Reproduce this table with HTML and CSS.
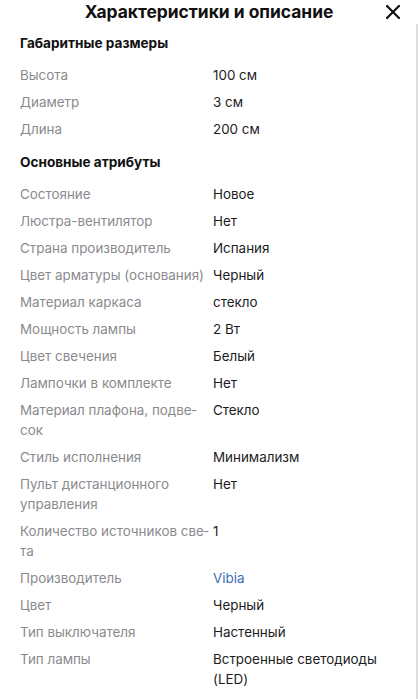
FILE: index.html
```html
<!DOCTYPE html>
<html lang="ru">
<head>
  <meta charset="UTF-8">
  <meta name="viewport" content="width=device-width, initial-scale=1.0">
  <title>Характеристики и описание</title>
  <link rel="stylesheet" href="styles.css">
</head>
<body>

  <div class="header">
    <span></span>
    <h1>Характеристики и описание</h1>
    <button class="close" aria-label="Закрыть">
      <svg width="14" height="14" viewBox="0 0 14 14">
        <path d="M1 1 L13 13 M13 1 L1 13" stroke="#111" stroke-width="2.2" stroke-linecap="round"/>
      </svg>
    </button>
  </div>

  <div class="content">
    <h2>Габаритные размеры</h2>
    <div class="specs">
      <div class="label">Высота</div><div class="value">100 см</div>
      <div class="label">Диаметр</div><div class="value">3 см</div>
      <div class="label">Длина</div><div class="value">200 см</div>
    </div>

    <h2>Основные атрибуты</h2>
    <div class="specs">
      <div class="label">Состояние</div><div class="value">Новое</div>
      <div class="label">Люстра-вентилятор</div><div class="value">Нет</div>
      <div class="label">Страна производитель</div><div class="value">Испания</div>
      <div class="label">Цвет арматуры (основания)</div><div class="value">Черный</div>
      <div class="label">Материал каркаса</div><div class="value">стекло</div>
      <div class="label">Мощность лампы</div><div class="value">2 Вт</div>
      <div class="label">Цвет свечения</div><div class="value">Белый</div>
      <div class="label">Лампочки в комплекте</div><div class="value">Нет</div>
      <div class="label">Материал плафона, подве&shy;сок</div><div class="value">Стекло</div>
      <div class="label">Стиль исполнения</div><div class="value">Минимализм</div>
      <div class="label">Пульт дистанционного управления</div><div class="value">Нет</div>
      <div class="label">Количество источников све&shy;та</div><div class="value">1</div>
      <div class="label">Производитель</div><div class="value"><a href="#">Vibia</a></div>
      <div class="label">Цвет</div><div class="value">Черный</div>
      <div class="label">Тип выключателя</div><div class="value">Настенный</div>
      <div class="label">Тип лампы</div><div class="value">Встроенные светодиоды (LED)</div>
    </div>
  </div>

</body>
</html>
```

FILE: styles.css
```css
* { box-sizing: border-box; margin: 0; padding: 0; }
body {
  font-family: Inter, "Noto Sans", sans-serif;
  background: #fff;
  color: #1c1c1e;
  width: 418px;
}
.header {
  display: grid;
  grid-template-columns: 1fr auto 1fr;
  align-items: center;
  height: 24px;
}
.header h1 {
  font-size: 17.4px;
  font-weight: 700;
  line-height: 24px;
  color: #111;
}
.close {
  justify-self: end;
  margin-right: 18px;
  background: none;
  border: none;
  display: flex;
  width: 14px;
  height: 14px;
}
.content {
  border-right: 2px solid #dedede;
  padding: 9px 0 20px 20px;
}
h2 {
  font-size: 13.6px;
  font-weight: 700;
  line-height: 20px;
  color: #111;
  margin-bottom: 8px;
}
.specs {
  display: grid;
  grid-template-columns: 191px 1fr;
  column-gap: 2px;
  margin-bottom: 10px;
}
.label, .value {
  font-size: 13.4px;
  line-height: 20px;
  padding: 3.5px 0;
}
.label {
  color: #8a8a8e;
  hyphens: manual;
}
.value {
  color: #1c1c1e;
  padding-right: 20px;
}
.value a {
  color: #3a6db3;
  text-decoration: none;
}
```
